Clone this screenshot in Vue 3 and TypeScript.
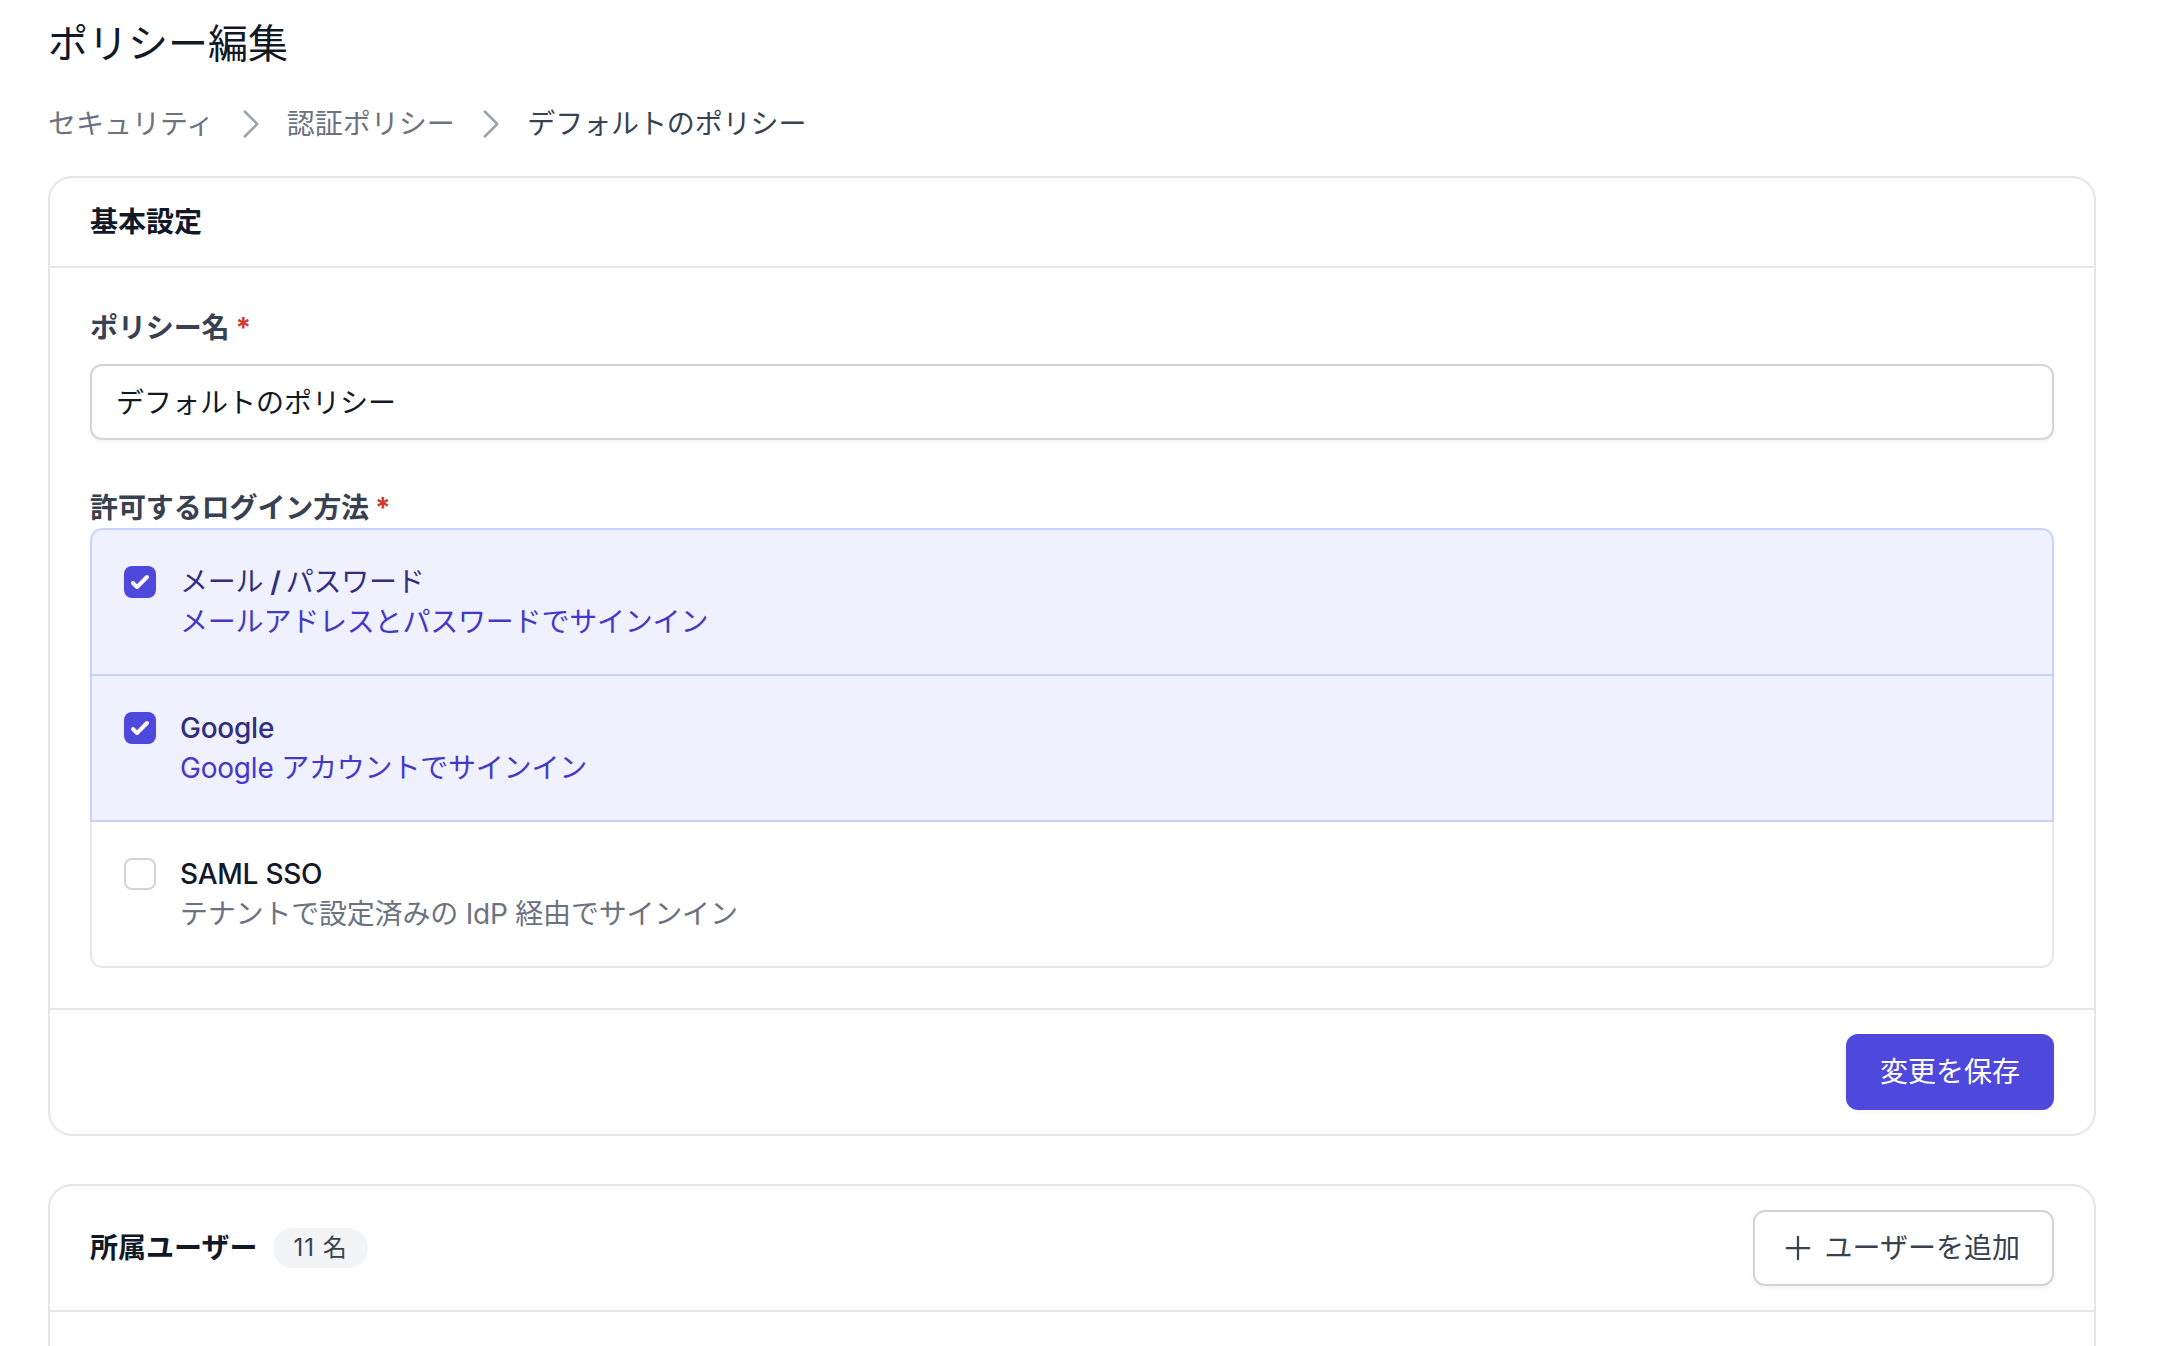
<template>
  <main class="page">
    <h1 class="page-title">ポリシー編集</h1>

    <nav class="crumbs" aria-label="パンくず">
      <template v-for="(crumb, i) in crumbs" :key="crumb">
        <svg v-if="i > 0" class="crumb-sep" viewBox="0 0 24 24" fill="none" aria-hidden="true">
          <path d="M8.25 4.5l7.5 7.5-7.5 7.5" stroke="currentColor" stroke-width="1.5" stroke-linecap="round" stroke-linejoin="round" />
        </svg>
        <span class="crumb" :class="{ current: i === crumbs.length - 1 }">{{ crumb }}</span>
      </template>
    </nav>

    <section class="card">
      <header class="card-head">
        <h2 class="card-title">基本設定</h2>
      </header>

      <div class="card-body">
        <label class="field-label" for="policy-name">ポリシー名<span class="req">*</span></label>
        <input id="policy-name" v-model="policyName" class="text-input" type="text" />

        <div class="field-label second">許可するログイン方法<span class="req">*</span></div>
        <div class="methods">
          <label v-for="m in methods" :key="m.id" class="method" :class="{ on: m.checked }">
            <input v-model="m.checked" class="native-check" type="checkbox" />
            <span class="check" aria-hidden="true">
              <svg v-if="m.checked" viewBox="0 0 16 16" fill="#fff">
                <path d="M12.207 4.793a1 1 0 010 1.414l-5 5a1 1 0 01-1.414 0l-2-2a1 1 0 011.414-1.414L6.5 9.086l4.293-4.293a1 1 0 011.414 0z" />
              </svg>
            </span>
            <span class="method-text">
              <span class="method-name" :class="{ plain: m.plain }">
                <template v-for="(part, i) in m.name.split(' / ')" :key="part"><span v-if="i > 0" class="slash">/</span>{{ part }}</template>
              </span>
              <span class="method-desc">{{ m.desc }}</span>
            </span>
          </label>
        </div>
      </div>

      <footer class="card-foot">
        <button class="btn primary" type="button">変更を保存</button>
      </footer>
    </section>

    <section class="card users">
      <header class="card-head with-action">
        <div class="head-left">
          <h2 class="card-title">所属ユーザー</h2>
          <span class="count">{{ userCount }} 名</span>
        </div>
        <button class="btn outline" type="button">
          <svg class="plus" viewBox="0 0 24 24" fill="none" aria-hidden="true">
            <path d="M12 4.5v15m7.5-7.5h-15" stroke="currentColor" stroke-width="1.5" stroke-linecap="round" stroke-linejoin="round" />
          </svg>
          ユーザーを追加
        </button>
      </header>
      <div class="users-body"></div>
    </section>
  </main>
</template>

<script setup lang="ts">
import { reactive, ref } from "vue";

interface LoginMethod {
  id: string;
  name: string;
  desc: string;
  checked: boolean;
  plain?: boolean;
}

const crumbs = ["セキュリティ", "認証ポリシー", "デフォルトのポリシー"];
const policyName = ref("デフォルトのポリシー");
const userCount = ref(11);

const methods = reactive<LoginMethod[]>([
  { id: "password", name: "メール / パスワード", desc: "メールアドレスとパスワードでサインイン", checked: true, plain: true },
  { id: "google", name: "Google", desc: "Google アカウントでサインイン", checked: true },
  { id: "saml", name: "SAML SSO", desc: "テナントで設定済みの IdP 経由でサインイン", checked: false },
]);
</script>

<style>
html, body {
  margin:0; background:#fff; overflow:hidden;
}
</style>

<style scoped>
.page {
  box-sizing:border-box; width:2160px; height:1346px; overflow:hidden;
  padding:16px 64px 0 48px; background:#fff; color:#111827;
  font-family:Inter, "Noto Sans CJK JP", sans-serif; font-size:28px; line-height:40px;
}

.page-title {
  margin:0; font-size:40px; line-height:56px; font-weight:400; color:#111827;
}

.crumbs {
  display:flex; align-items:center; gap:16.25px; margin-top:32px; color:#6b7280;
}

.crumb.current { color:#374151; letter-spacing:-0.1px; }

.crumb-sep {
  width:40px; height:40px; color:#9ca3af; flex:none;
}

.card {
  margin-top:32px; border:2px solid #e5e7eb; border-radius:24px; background:#fff;
}

.card.users { margin-top:48px; }

.card-head {
  padding:24px 40px; border-bottom:2px solid #e5e7eb;
}

.card-head.with-action {
  display:flex; align-items:center; justify-content:space-between;
}

.head-left {
  display:flex; align-items:center; gap:16px;
}

.card-title {
  margin:0; font-size:28px; line-height:40px; font-weight:700; color:#111827;
}

.count {
  padding:0 20px; border-radius:999px; background:#f3f4f6; color:#374151;
  font-size:24px; line-height:40px; letter-spacing:1px;
}

.card-body {
  padding:40px;
}

.field-label {
  display:block; font-weight:700; color:#374151; letter-spacing:-0.1px;
}

.field-label.second { margin-top:48px; }

.req {
  margin-left:6px; color:#cf3a2e;
}

.text-input {
  display:block; box-sizing:border-box; width:100%; height:76px; margin-top:16px;
  padding:0 24px 3px; border:2px solid #d1d5db; border-radius:12px; outline:none;
  background:#fff; color:#111827; font:inherit;
  box-shadow:0 2px 4px rgba(0,0,0,0.05);
}

.methods {
  border-radius:12px; overflow:hidden;
}

.method {
  position:relative; display:flex; gap:24px; padding:32px; margin-top:-2px;
  border:2px solid #e5e7eb; background:#fff; cursor:pointer;
}

.method:first-child { margin-top:0; border-radius:12px 12px 0 0; }
.method:last-child { border-radius:0 0 12px 12px; }

.method.on {
  z-index:1; border-color:#c7d2fe; background:#eff1fe;
}

.native-check {
  position:absolute; width:1px; height:1px; opacity:0; margin:0;
}

.check {
  box-sizing:border-box; flex:none; width:32px; height:32px; margin-top:4px;
  border:2px solid #d1d5db; border-radius:8px; background:#fff;
}

.method.on .check {
  border:none; background:#4f48dc;
}

.check svg {
  display:block; width:32px; height:32px;
}

.method-text {
  display:flex; flex-direction:column;
}

.method-name {
  font-weight:500; color:#111827; letter-spacing:-0.25px;
}

.method-name.plain { font-weight:400; }

.slash {
  margin:0 5px 0 7px; font-weight:600;
}

.method-desc {
  color:#6b7280; letter-spacing:-0.2px;
}

.method.on .method-name { color:#312e81; }
.method.on .method-desc { color:#4338ca; }

.card-foot {
  display:flex; justify-content:flex-end; padding:24px 40px; border-top:2px solid #e5e7eb;
}

.btn {
  box-sizing:border-box; height:76px; padding:0 32px; border:2px solid transparent; border-radius:12px;
  font:inherit; cursor:pointer; display:inline-flex; align-items:center;
  box-shadow:0 2px 4px rgba(0,0,0,0.05);
}

.btn.primary {
  background:#4f48dc; color:#fff;
}

.btn.outline {
  padding-left:25px; gap:9px; background:#fff; border-color:#d1d5db; color:#374151;
}

.plus {
  width:36px; height:36px; flex:none;
}

.users-body {
  height:200px;
}
</style>
